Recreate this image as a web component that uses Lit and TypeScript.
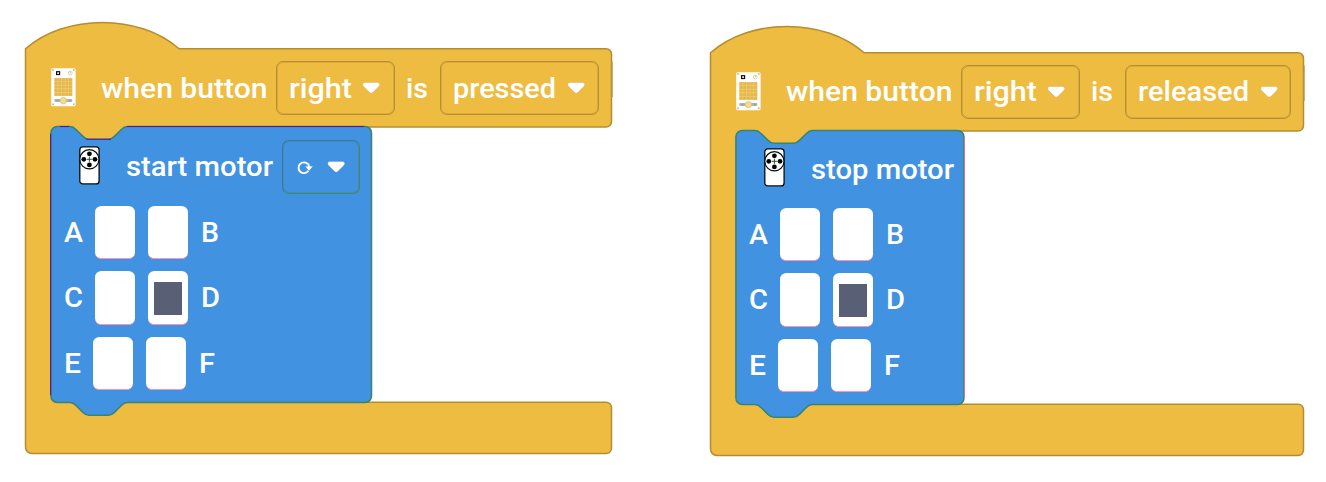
import { LitElement, html, svg, css } from "lit";
import { customElement, property } from "lit/decorators.js";
import { styleMap } from "lit/directives/style-map.js";

interface Stack {
  x: number;
  y: number;
  width: number;
  textDrop: number;
  state: string;
  stateWidth: number;
  stateBox: number;
  motor: string;
  motorWidth: number;
  motorText: number;
  direction: boolean;
  blockWidth: number;
  blockHeight: number;
  lift: number;
}

const STACKS: Stack[] = [
  { x: 25, y: 22, width: 586.5, textDrop: -0.2, state: "pressed", stateWidth: 103, stateBox: 159,
    motor: "start motor", motorWidth: 147, motorText: 49.9, direction: true, blockWidth: 321, blockHeight: 276, lift: 0 },
  { x: 710, y: 26, width: 593.5, textDrop: -1.2, state: "released", stateWidth: 111, stateBox: 166,
    motor: "stop motor", motorWidth: 143, motorText: 49.2, direction: false, blockWidth: 228.5, blockHeight: 274, lift: 2 },
];

/* Fixed-width run of block text, drawn on its baseline inside a flow box. */
const label = (text: string, width: number, height: number, base: number) => html`
  <svg class="label" width=${width} height=${height}>
    <text x="0" y=${base} textLength=${width} lengthAdjust="spacingAndGlyphs">${text}</text>
  </svg>`;

const arrow = (stroke: string) => html`
  <svg class="arrow" width="18" height="12" viewBox="0 0 18 12">
    <path d="M2.6 .6H15.8Q17.8 .8 17.7 2.6Q17.6 3.8 16.6 4.8L11 10.3Q9.2 12 7.4 10.3L1.8 4.8Q.8 3.8 .7 2.6Q.6 .8 2.6 .6Z" fill="#fff" stroke=${stroke} stroke-opacity=".35" stroke-width=".6"/>
  </svg>`;

const hub = () => html`
  <svg class="hub" width="25" height="39" viewBox="0 0 25 39">
    <rect x=".2" y=".2" width="24.4" height="38" rx="1.5" fill="#fff"/>
    <g fill="#bbb">
      <circle cx="2" cy="2" r="1"/><circle cx="22.8" cy="2" r="1"/>
      <circle cx="2" cy="36.3" r="1"/><circle cx="22.8" cy="36.3" r="1"/>
    </g>
    <rect x="5.6" y="3.7" width="3" height="2.8" fill="#fff" stroke="#111" stroke-width="1.2"/>
    <circle cx="19.3" cy="5" r="1.9" fill="#fff" stroke="#d8c493" stroke-width=".8"/>
    <path d="M19.3 3.6V5.4" stroke="#c9ad68" stroke-width=".8"/>
    <rect x="3.3" y="10" width="18.2" height="18" fill="#e0d0a4"/>
    ${[0, 1, 2, 3, 4].map((r) => [0, 1, 2, 3, 4].map((c) => svg`
      <rect x=${3.6 + c * 3.6} y=${10.3 + r * 3.6} width="3" height="3" fill="#edb73b"/>`))}
    <rect x="3.3" y="31" width="18" height="3" rx="1" fill="#b1b5b3"/>
    <circle cx="6.5" cy="32.5" r="1" fill="#83ad8c"/><circle cx="19" cy="32.5" r="1" fill="#8fa693"/>
    <circle cx="12.4" cy="32.6" r="3.2" fill="#f6d993" stroke="#d8b25b" stroke-width=".6"/>
  </svg>`;

const motorIcon = () => html`
  <svg class="motor-icon" width="21" height="39" viewBox="0 0 21 39">
    <rect x=".8" y=".9" width="19.3" height="37" rx="3" fill="#fff" stroke="#080c0c" stroke-width="1.3"/>
    <circle cx="10.4" cy="13.3" r="9.6" fill="#fff" stroke="#080c0c" stroke-width="1.2"/>
    <g fill="#000">
      <circle cx="10.4" cy="7.8" r="2.4"/><circle cx="10.4" cy="18.9" r="2.4"/>
      <circle cx="4.8" cy="13.3" r="2.4"/><circle cx="16" cy="13.3" r="2.4"/>
    </g>
    <path d="M10.4 10.8V15.8M7.9 13.3H12.9" stroke="#1d5c2c" stroke-width="1"/>
  </svg>`;

const NOTCH = "c3.2 0 4.8 1.6 6.4 3.2l6.4 6.4c1.6 1.6 3.2 3.2 6.4 3.2h19.2c3.2 0 4.8 -1.6 6.4 -3.2l6.4 -6.4c1.6 -1.6 3.2 -3.2 6.4 -3.2";
const NOTCH_BACK = "c-3.2 0 -4.8 1.6 -6.4 3.2l-6.4 6.4c-1.6 1.6 -3.2 3.2 -6.4 3.2h-19.2c-3.2 0 -4.8 -1.6 -6.4 -3.2l-6.4 -6.4c-1.6 -1.6 -3.2 -3.2 -6.4 -3.2";

@customElement("motor-block")
export class MotorBlock extends LitElement {
  @property({ attribute: false }) data!: Stack;

  static styles = css`
    :host { display: flow-root; position: relative; }
    svg { display: block; flex: none; overflow: visible; }
    text { font: 500 28px Roboto, "Open Sans", sans-serif; fill: #fff; }
    .shape { position: absolute; left: 0; top: 0; }
    .content { position: relative; box-sizing: border-box; padding-left: 14px; }
    .head { display: flex; align-items: flex-start; height: 79.9px; }
    .motor-icon { margin: 20.4px 26px 0 15px; }
    .field { box-sizing: border-box; display: flex; align-items: center; width: 77.5px; height: 54px; margin: 13.5px 0 0 9px; padding-left: 13px; border: 1px solid #3b7a95; border-right-color: #468a63; border-bottom-color: #468a63; border-radius: 7px; box-shadow: inset 0 0 0 1px #3b7a7550; }
    .spin { margin-top: 3px; }
    .field .arrow { margin-left: 14px; }
    .row { display: flex; height: 53.3px; margin-bottom: 12.3px; }
    .cell { display: flex; align-items: center; justify-content: center; box-sizing: border-box; width: 40px; height: 53.3px; border-radius: 6.4px; background: #fff; border-bottom: 1px solid #f993b8; margin-right: 13px; }
    .mark { width: 28px; height: 33px; margin-top: 1.4px; background: #595f75; }
    .left { width: 31px; flex: none; }
    .last .left { width: 29.3px; }
  `;

  private row(a: string, aw: number, b: string, bw: number, on: boolean, last: boolean) {
    return html`<div class="row ${last ? "last" : ""}">
      <div class="left">${label(a, aw, 53, 36.1)}</div>
      <div class="cell"></div>
      <div class="cell">${on ? html`<div class="mark"></div>` : null}</div>
      ${label(b, bw, 53, 36.1)}
    </div>`;
  }

  render() {
    const d = this.data;
    const w = d.blockWidth, h = d.blockHeight;
    const path = `M.9 6.9A6.4 6.4 0 0 1 7.3 .5H19.9${NOTCH}H${w - 5.9}a6.4 6.4 0 0 1 6.4 6.4V${h - 5.9}a6.4 6.4 0 0 1 -6.4 6.4H77.5${NOTCH_BACK}H7.3a6.4 6.4 0 0 1 -6.4 -6.4Z`;
    return html`
      <svg class="shape" width=${w + 1} height=${h + 14}>
        <path d=${path} fill="#4192e0" stroke="#388471" stroke-width="1.5"/>
        ${d.direction
          ? svg`<path d=${`M.6 8V${h - 7}M10 .5H19M36 13.3H61M77 .5H${w - 7}`} fill="none" stroke="#65109a" stroke-width="1.1"/>`
          : svg`<path d=${`M${w + 1} 8V${h - 6}`} stroke="#f06fa0" stroke-width=".8"/>`}
      </svg>
      <div class="content" style=${styleMap({ marginTop: `${-d.lift}px` })}>
        <div class="head">
          ${motorIcon()}
          ${label(d.motor, d.motorWidth, 60, d.motorText + d.lift + (d.direction ? 0 : -.2))}
          ${d.direction ? html`<div class="field">
            <svg class="spin" width="17" height="14" viewBox="0 0 17 14">
              <path d="M12 3.2A5.4 5.4 0 1 0 12.4 9.8" fill="none" stroke="#fff" stroke-width="1.9"/>
              <path d="M9.3 5.6L16.8 5.3L13 9.8Z" fill="#fff"/>
              <path d="M12.3 2.8L13 6" stroke="#fff" stroke-width="1.9"/>
            </svg>${arrow("#275a91")}
          </div>` : null}
        </div>
        ${this.row("A", 19, "B", 18, false, false)}
        ${this.row("C", 19, "D", 19, true, false)}
        ${this.row("E", 17, "F", 16, false, true)}
      </div>`;
  }
}

@customElement("event-stack")
export class EventStack extends LitElement {
  @property({ attribute: false }) data!: Stack;

  static styles = css`
    :host { display: block; position: relative; }
    svg { display: block; flex: none; overflow: visible; }
    text { font: 500 28px Roboto, "Open Sans", sans-serif; fill: #fff; }
    .shape { position: absolute; left: 0; top: 0; }
    .head { position: relative; display: flex; align-items: center; box-sizing: border-box; height: 104px; padding: 27px 0 0 26px; }
    .hub { margin: -1px 25px 0 0; }
    .field { flex: none; box-sizing: border-box; display: flex; align-items: center; height: 54px; padding-left: 12px; border: 1px solid #b58f31; border-radius: 7px; box-shadow: inset 0 0 0 1px #b58f3166; }
    .button { width: 119px; margin: 0 11.5px 0 8px; }
    .state { margin-left: 12px; }
    .arrow { margin-left: 10.5px; }
    .body { margin-left: 25px; }
  `;

  render() {
    const d = this.data;
    const r = d.width, armTop = 104.5 + d.blockHeight, bottom = armTop + 51;
    const path = `M.5 26.8c40 -35.2 113.6 -35.2 153.6 0H${r - 5.4}a5.4 5.4 0 0 1 5.4 5.4V99.6a5.4 5.4 0 0 1 -5.4 5.4H200V${armTop - .3}H${r - 5.4}a5.4 5.4 0 0 1 5.4 5.4V${bottom - 5.4}a5.4 5.4 0 0 1 -5.4 5.4H6.9a6.4 6.4 0 0 1 -6.4 -6.4Z`;
    const base = 32.8 + d.textDrop + 4;
    return html`
      <svg class="shape" width=${r + 2} height=${bottom + 1}>
        <path d=${path} fill="#eebc41" stroke="#b38e31" stroke-width="1.5"/>
        <path d=${`M${r + .7} 39.5V75`} stroke="#b99c55" stroke-width="1"/>
      </svg>
      <div class="head">
        ${hub()}
        ${label("when button", 166.5, 54, base)}
        <div class="field button">${label("right", 63, 54, base)}${arrow("#957628")}</div>
        ${label("is", 22, 54, base)}
        <div class="field state" style=${styleMap({ width: `${d.stateBox}px` })}>
          ${label(d.state, d.stateWidth, 54, base)}${arrow("#957628")}
        </div>
      </div>
      <motor-block class="body" .data=${d}></motor-block>`;
  }
}

@customElement("app-root")
export class AppRoot extends LitElement {
  static styles = css`
    :host { display: block; position: relative; width: 1326px; height: 482px; overflow: hidden; background: #fff; }
    .stack { position: absolute; }
  `;

  render() {
    return html`${STACKS.map((s) => html`
      <event-stack class="stack" .data=${s} style=${styleMap({ left: `${s.x}px`, top: `${s.y}px` })}></event-stack>`)}`;
  }
}
